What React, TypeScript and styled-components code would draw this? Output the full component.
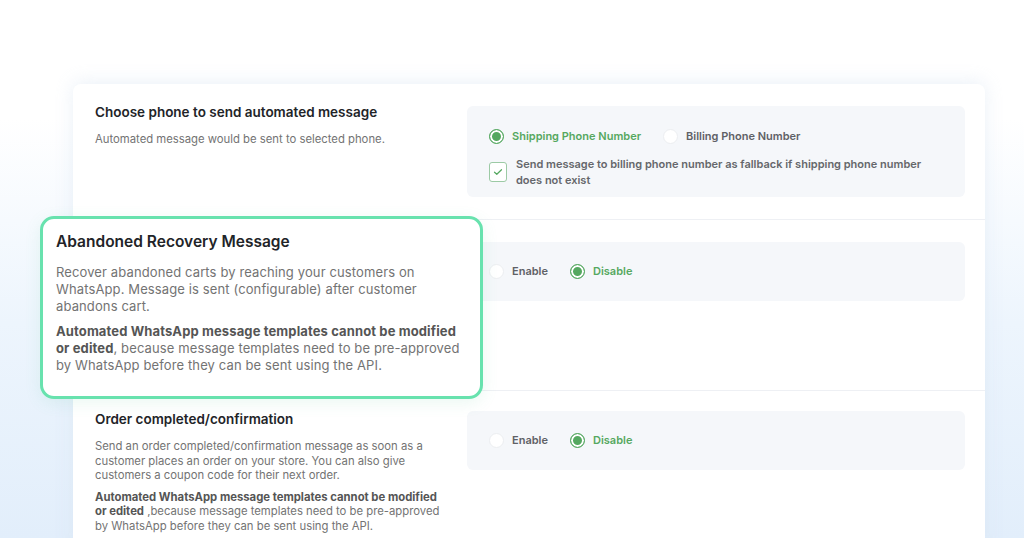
import styled, { createGlobalStyle } from 'styled-components';

const GlobalStyle = createGlobalStyle`
  html, body {
    margin: 0;
    padding: 0;
  }
  body {
    font-family: Inter, 'Noto Sans', sans-serif;
    background: linear-gradient(180deg, #ffffff 0%, #ffffff 22%, #edf5fd 60%, #e2eefb 100%);
  }
`;

const green = '#55a860';

const Page = styled.div`
  height: 538px;
  overflow: hidden;
  padding: 84px 0 0 73px;
  box-sizing: border-box;
`;

const Card = styled.div`
  width: 912px;
  background: #ffffff;
  border-radius: 8px 8px 0 0;
  box-shadow: 0 -2px 18px rgba(210, 225, 240, 0.45);
`;

const Row = styled.div<{ $last?: boolean }>`
  display: grid;
  grid-template-columns: 350px 498px;
  column-gap: 22px;
  padding: 22px 20px 22px 22px;
  border-bottom: ${p => (p.$last ? 'none' : '1px solid #eef0f4')};
`;

const Info = styled.div`
  display: flex;
  flex-direction: column;
  max-width: 346px;
`;

const Title = styled.h3`
  margin: -2px 0 0;
  font-size: 13.5px;
  line-height: 16px;
  font-weight: 600;
  color: #222428;
`;

const Desc = styled.p<{ $gap?: number }>`
  margin: ${p => p.$gap ?? 11}px 0 0;
  font-size: 11.3px;
  line-height: 14.5px;
  color: #737373;
  b {
    color: #555;
    font-weight: 700;
  }
`;

const Callout = styled.div`
  position: relative;
  z-index: 2;
  width: 443px;
  box-sizing: border-box;
  margin: -26px 0 -31px -55px;
  padding: 13px 14px 22px 13px;
  background: #ffffff;
  border: 3px solid #68e2ae;
  border-radius: 14px;
  box-shadow: 0 4px 16px rgba(90, 200, 150, 0.12);
`;

const CalloutTitle = styled.h2`
  margin: 0;
  font-size: 15.5px;
  line-height: 20px;
  font-weight: 600;
  color: #222428;
`;

const CalloutText = styled.p<{ $gap: number }>`
  margin: ${p => p.$gap}px 0 0;
  font-size: 13px;
  letter-spacing: 0.12px;
  line-height: 17px;
  color: #737373;
  b {
    color: #555;
    font-weight: 700;
  }
`;

const OptionsBox = styled.div<{ $pad: string; $shift?: number }>`
  align-self: start;
  margin-top: ${p => p.$shift ?? 0}px;
  background: #f5f7fa;
  border-radius: 6px;
  padding: ${p => p.$pad};
  display: flex;
  flex-direction: column;
  gap: 12px;
`;

const RadioGroup = styled.div`
  display: flex;
  align-items: center;
  gap: 22px;
  height: 16px;
`;

const RadioItem = styled.label<{ $on?: boolean }>`
  display: flex;
  align-items: center;
  gap: 8px;
  font-size: 11px;
  font-weight: 600;
  color: ${p => (p.$on ? green : '#5f6166')};
`;

const RadioDot = styled.span<{ $on?: boolean }>`
  width: 15px;
  height: 15px;
  box-sizing: border-box;
  border-radius: 50%;
  background: ${p => (p.$on ? green : '#ffffff')};
  border: ${p => (p.$on ? `1.5px solid ${green}` : '1px solid #eceef1')};
  box-shadow: ${p => (p.$on ? 'inset 0 0 0 2px #ffffff' : 'none')};
  flex-shrink: 0;
`;

const CheckRow = styled.label`
  display: flex;
  align-items: flex-start;
  gap: 9px;
  font-size: 11px;
  line-height: 16px;
  font-weight: 600;
  color: #65676b;
`;

const CheckBox = styled.span`
  width: 18px;
  height: 20px;
  margin-top: 6px;
  box-sizing: border-box;
  border: 1px solid #9ccaa5;
  border-radius: 3px;
  background: #ffffff;
  display: flex;
  align-items: center;
  justify-content: center;
  flex-shrink: 0;
`;

const Radio = ({ label, on }: { label: string; on?: boolean }) => (
  <RadioItem $on={on}>
    <RadioDot $on={on} />
    {label}
  </RadioItem>
);

const Toggle = ({ pad, shift }: { pad: string; shift?: number }) => (
  <OptionsBox $pad={pad} $shift={shift}>
    <RadioGroup>
      <Radio label="Enable" />
      <Radio label="Disable" on />
    </RadioGroup>
  </OptionsBox>
);

export default function App() {
  return (
    <>
      <GlobalStyle />
      <Page>
        <Card>
          <Row>
            <Info>
              <Title>Choose phone to send automated message</Title>
              <Desc $gap={12}>Automated message would be sent to selected phone.</Desc>
            </Info>
            <OptionsBox $pad="22px 22px 9px">
              <RadioGroup>
                <Radio label="Shipping Phone Number" on />
                <Radio label="Billing Phone Number" />
              </RadioGroup>
              <CheckRow>
                <CheckBox>
                  <svg width="10" height="8" viewBox="0 0 10 8" fill="none">
                    <path d="M1.5 4.2 L3.8 6.3 L8.5 1.7" stroke={green} strokeWidth="1.2" strokeLinecap="round" strokeLinejoin="round" />
                  </svg>
                </CheckBox>
                <span>
                  Send message to billing phone number as fallback if shipping phone number
                  <br />
                  does not exist
                </span>
              </CheckRow>
            </OptionsBox>
          </Row>

          <Row>
            <Callout>
              <CalloutTitle>Abandoned Recovery Message</CalloutTitle>
              <CalloutText $gap={12}>
                Recover abandoned carts by reaching your customers on WhatsApp. Message is sent
                (configurable) after customer abandons cart.
              </CalloutText>
              <CalloutText $gap={8}>
                <b>Automated WhatsApp message templates cannot be modified or edited</b>, because
                message templates need to be pre-approved by WhatsApp before they can be sent using
                the API.
              </CalloutText>
            </Callout>
            <Toggle pad="21px 22px 22px" />
          </Row>

          <Row $last>
            <Info>
              <Title>Order completed/confirmation</Title>
              <Desc $gap={12}>
                Send an order completed/confirmation message as soon as a customer places an order
                on your store. You can also give customers a coupon code for their next order.
              </Desc>
              <Desc $gap={7}>
                <b>Automated WhatsApp message templates cannot be modified or edited</b> ,because
                message templates need to be pre-approved by WhatsApp before they can be sent using
                the API.
              </Desc>
            </Info>
            <Toggle pad="21px 22px 22px" shift={-2} />
          </Row>
        </Card>
      </Page>
    </>
  );
}
